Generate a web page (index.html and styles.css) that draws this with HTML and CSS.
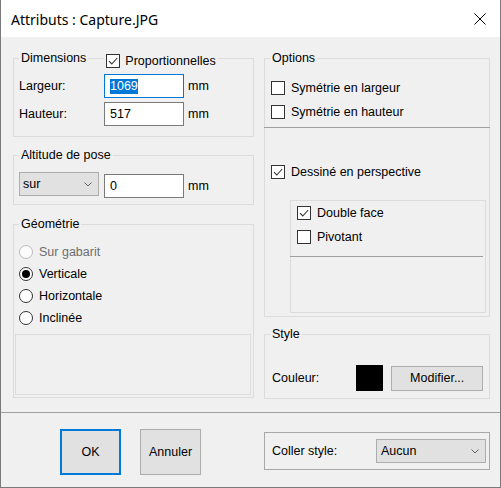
FILE: index.html
```html
<!DOCTYPE html>
<html lang="fr">
<head>
<meta charset="utf-8">
<title>Attributs : Capture.JPG</title>
<link rel="stylesheet" href="styles.css">
</head>
<body>
<div class="window">
  <div class="titlebar">
    <span class="title">Attributs : Capture.JPG</span>
    <svg class="close" width="12" height="12" viewBox="0 0 12 12"><path d="M0.5 0.5 L11.5 11.5 M11.5 0.5 L0.5 11.5" stroke="#000" stroke-width="1" fill="none"/></svg>
  </div>

  <div class="main">
    <div class="col">
      <div class="group g-dim">
        <div class="legend">
          <span class="lg-text">Dimensions</span>
          <span class="lg-gap"></span>
          <span class="lg-text lg-check"><span class="cb"><svg width="12" height="12" viewBox="0 0 12 12"><path d="M2 6.2 L4.8 9 L10.2 3" fill="none" stroke="#333" stroke-width="1.1"/></svg></span>Proportionnelles</span>
        </div>
        <div class="rows">
          <div class="field-row"><span class="lbl">Largeur:</span><span class="input focus"><span class="sel">1069</span></span><span class="unit">mm</span></div>
          <div class="field-row"><span class="lbl">Hauteur:</span><span class="input">517</span><span class="unit">mm</span></div>
        </div>
      </div>

      <div class="group g-alt">
        <div class="legend"><span class="lg-text">Altitude de pose</span></div>
        <div class="alt-row">
          <span class="combo combo-sur"><span class="combo-text">sur</span><svg width="8" height="5" viewBox="0 0 8 5"><path d="M0.5 0.5 L4 4 L7.5 0.5" fill="none" stroke="#606060" stroke-width="1"/></svg></span>
          <span class="input input-alt">0</span><span class="unit">mm</span>
        </div>
      </div>

      <div class="group g-geo">
        <div class="legend"><span class="lg-text">Géométrie</span></div>
        <div class="radios">
          <div class="radio-row disabled"><span class="radio"></span>Sur gabarit</div>
          <div class="radio-row"><span class="radio on"></span>Verticale</div>
          <div class="radio-row"><span class="radio"></span>Horizontale</div>
          <div class="radio-row"><span class="radio"></span>Inclinée</div>
        </div>
        <div class="blank-box"></div>
      </div>
    </div>

    <div class="col">
      <div class="group g-opt">
        <div class="legend legend-r"><span class="lg-text">Options</span></div>
        <div class="opt-rows">
          <div class="check-row"><span class="cb"></span>Symétrie en largeur</div>
          <div class="check-row"><span class="cb"></span>Symétrie en hauteur</div>
        </div>
        <div class="sep-opt"></div>
        <div class="check-row persp"><span class="cb"><svg width="12" height="12" viewBox="0 0 12 12"><path d="M2 6.2 L4.8 9 L10.2 3" fill="none" stroke="#333" stroke-width="1.1"/></svg></span>Dessiné en perspective</div>
        <div class="sub-box">
          <div class="check-row"><span class="cb"><svg width="12" height="12" viewBox="0 0 12 12"><path d="M2 6.2 L4.8 9 L10.2 3" fill="none" stroke="#333" stroke-width="1.1"/></svg></span>Double face</div>
          <div class="check-row"><span class="cb"></span>Pivotant</div>
          <div class="sep-sub"></div>
        </div>
      </div>

      <div class="group g-style">
        <div class="legend legend-r"><span class="lg-text">Style</span></div>
        <div class="style-row">
          <span class="style-lbl">Couleur:</span>
          <span class="swatch"></span>
          <span class="button btn-mod">Modifier...</span>
        </div>
      </div>
    </div>
  </div>

  <div class="footer-sep"></div>

  <div class="footer">
    <span class="button btn-big btn-default">OK</span>
    <span class="button btn-big btn-cancel">Annuler</span>
    <div class="paste-box">
      <span>Coller style:</span>
      <span class="combo combo-aucun"><span class="combo-text">Aucun</span><svg width="8" height="5" viewBox="0 0 8 5"><path d="M0.5 0.5 L4 4 L7.5 0.5" fill="none" stroke="#606060" stroke-width="1"/></svg></span>
    </div>
  </div>
</div>
</body>
</html>
```

FILE: styles.css
```css
* { box-sizing: border-box; }
html, body { margin: 0; padding: 0; }
body {
  width: 501px;
  height: 488px;
  font-family: "Liberation Sans", Arial, sans-serif;
  font-size: 12.5px;
  color: #000;
  background: #f0f0f0;
}
.window {
  width: 501px;
  height: 488px;
  border: 1px solid #7a7a7a;
  border-top: none;
  background: #f0f0f0;
  display: flex;
  flex-direction: column;
}
.titlebar {
  flex: none;
  height: 37px;
  background: #fff;
  display: flex;
  align-items: center;
  padding: 1px 14px 0 10px;
}
.title {
  flex: 1;
  font-family: "Noto Sans", "Open Sans", sans-serif;
  font-size: 14px;
}
.close { display: block; }

.main {
  display: grid;
  grid-template-columns: 241px 226px;
  column-gap: 10px;
  padding: 21px 0 0 12px;
  align-items: start;
}
.col { display: flex; flex-direction: column; }

.group {
  border: 1px solid #dcdcdc;
  padding: 0 5px;
}
.legend {
  display: flex;
  align-items: center;
  height: 14px;
  line-height: 14px;
  margin-top: -8px;
  width: max-content;
}
.legend-r { margin-left: -1px; }
.lg-text { background: #f0f0f0; padding: 0 2px; white-space: nowrap; }
.lg-gap {
  align-self: flex-start;
  margin-top: 7px;
  height: 1px;
  width: 16px;
}
.lg-check {
  align-self: flex-start;
  margin-top: 3px;
  display: flex;
  align-items: center;
  padding-left: 2px;
}

.cb {
  flex: none;
  width: 14px;
  height: 14px;
  border: 1px solid #333;
  background: #fff;
  margin-right: 5px;
  display: flex;
  align-items: center;
  justify-content: center;
}
.cb svg { display: block; }

/* Dimensions */
.rows {
  display: flex;
  flex-direction: column;
  gap: 4px;
  padding: 9px 0 10px;
}
.field-row { display: flex; align-items: center; height: 24px; }
.lbl { width: 85px; }
.input {
  width: 80px;
  height: 24px;
  border: 1px solid #7a7a7a;
  background: #fff;
  padding-left: 5px;
  display: flex;
  align-items: center;
}
.input.focus { border-color: #0078d7; }
.sel { background: #0078d7; color: #fff; line-height: 15px; }
.unit { margin-left: 4px; }

/* Altitude */
.g-alt { margin-top: 18px; }
.alt-row {
  display: flex;
  align-items: flex-start;
  padding: 10px 0 6px;
}
.combo {
  height: 24px;
  background: #e1e1e1;
  border: 1px solid #adadad;
  display: flex;
  align-items: center;
}
.combo-text { flex: 1; }
.combo-sur { width: 80px; padding: 0 6px 0 3px; margin-right: 5px; }
.input-alt { margin-top: 2px; }
.alt-row .unit { align-self: center; margin-top: 2px; }

/* Geometrie */
.g-geo { margin-top: 19px; padding-bottom: 2px; }
.radios { padding-top: 10px; }
.radio-row { display: flex; align-items: center; height: 22px; }
.radio {
  flex: none;
  width: 14px;
  height: 14px;
  border: 1px solid #333;
  border-radius: 50%;
  background: #fff;
  margin-right: 6px;
  display: flex;
  align-items: center;
  justify-content: center;
}
.radio.on::after {
  content: "";
  width: 8px;
  height: 8px;
  border-radius: 50%;
  background: #000;
}
.radio-row.disabled { color: #6d6d6d; }
.radio-row.disabled .radio { border-color: #bcbcbc; background: #fcfcfc; }
.blank-box {
  margin: 5px 0 0 -4px;
  width: 236px;
  height: 61px;
  border: 1px solid #dcdcdc;
}

/* Options */
.g-opt { padding: 0 6px 3px; }
.opt-rows { padding-top: 11px; }
.check-row { display: flex; align-items: center; height: 24px; }
.check-row .cb { margin-right: 6px; }
.sep-opt {
  margin: 3px -7px 0;
  height: 1px;
  background: #a0a0a0;
}
.persp { margin-top: 32px; }
.sub-box {
  margin: 16px -3px 0 19px;
  height: 113px;
  border: 1px solid #dcdcdc;
  padding: 0 6px;
}
.sep-sub {
  margin: 7px 0 0 -7px;
  width: 193px;
  height: 1px;
  background: #a0a0a0;
}

/* Style */
.g-style { margin-top: 17px; padding: 0 6px 7px; }
.style-row {
  display: flex;
  align-items: center;
  height: 26px;
  margin-top: 24px;
}
.style-lbl { width: 85px; padding-left: 1px; }
.swatch { width: 28px; height: 26px; background: #000; margin-right: 8px; }
.button {
  background: #e1e1e1;
  border: 1px solid #adadad;
  display: flex;
  align-items: center;
  justify-content: center;
}
.btn-mod { width: 92px; height: 25px; }

/* Footer */
.footer-sep {
  margin-top: 13px;
  height: 1px;
  background: #a0a0a0;
}
.footer {
  display: flex;
  align-items: flex-start;
  padding: 16px 10px 0 59px;
}
.btn-big { width: 61px; height: 46px; }
.btn-default { border: 2px solid #0078d7; }
.btn-cancel { margin-left: 19px; }
.paste-box {
  margin-left: auto;
  margin-top: 3px;
  width: 226px;
  height: 38px;
  border: 1px solid #a9a9a9;
  display: flex;
  align-items: center;
  padding: 0 3px 0 7px;
}
.combo-aucun {
  margin-left: auto;
  width: 110px;
  padding: 0 6px 0 4px;
}
```
